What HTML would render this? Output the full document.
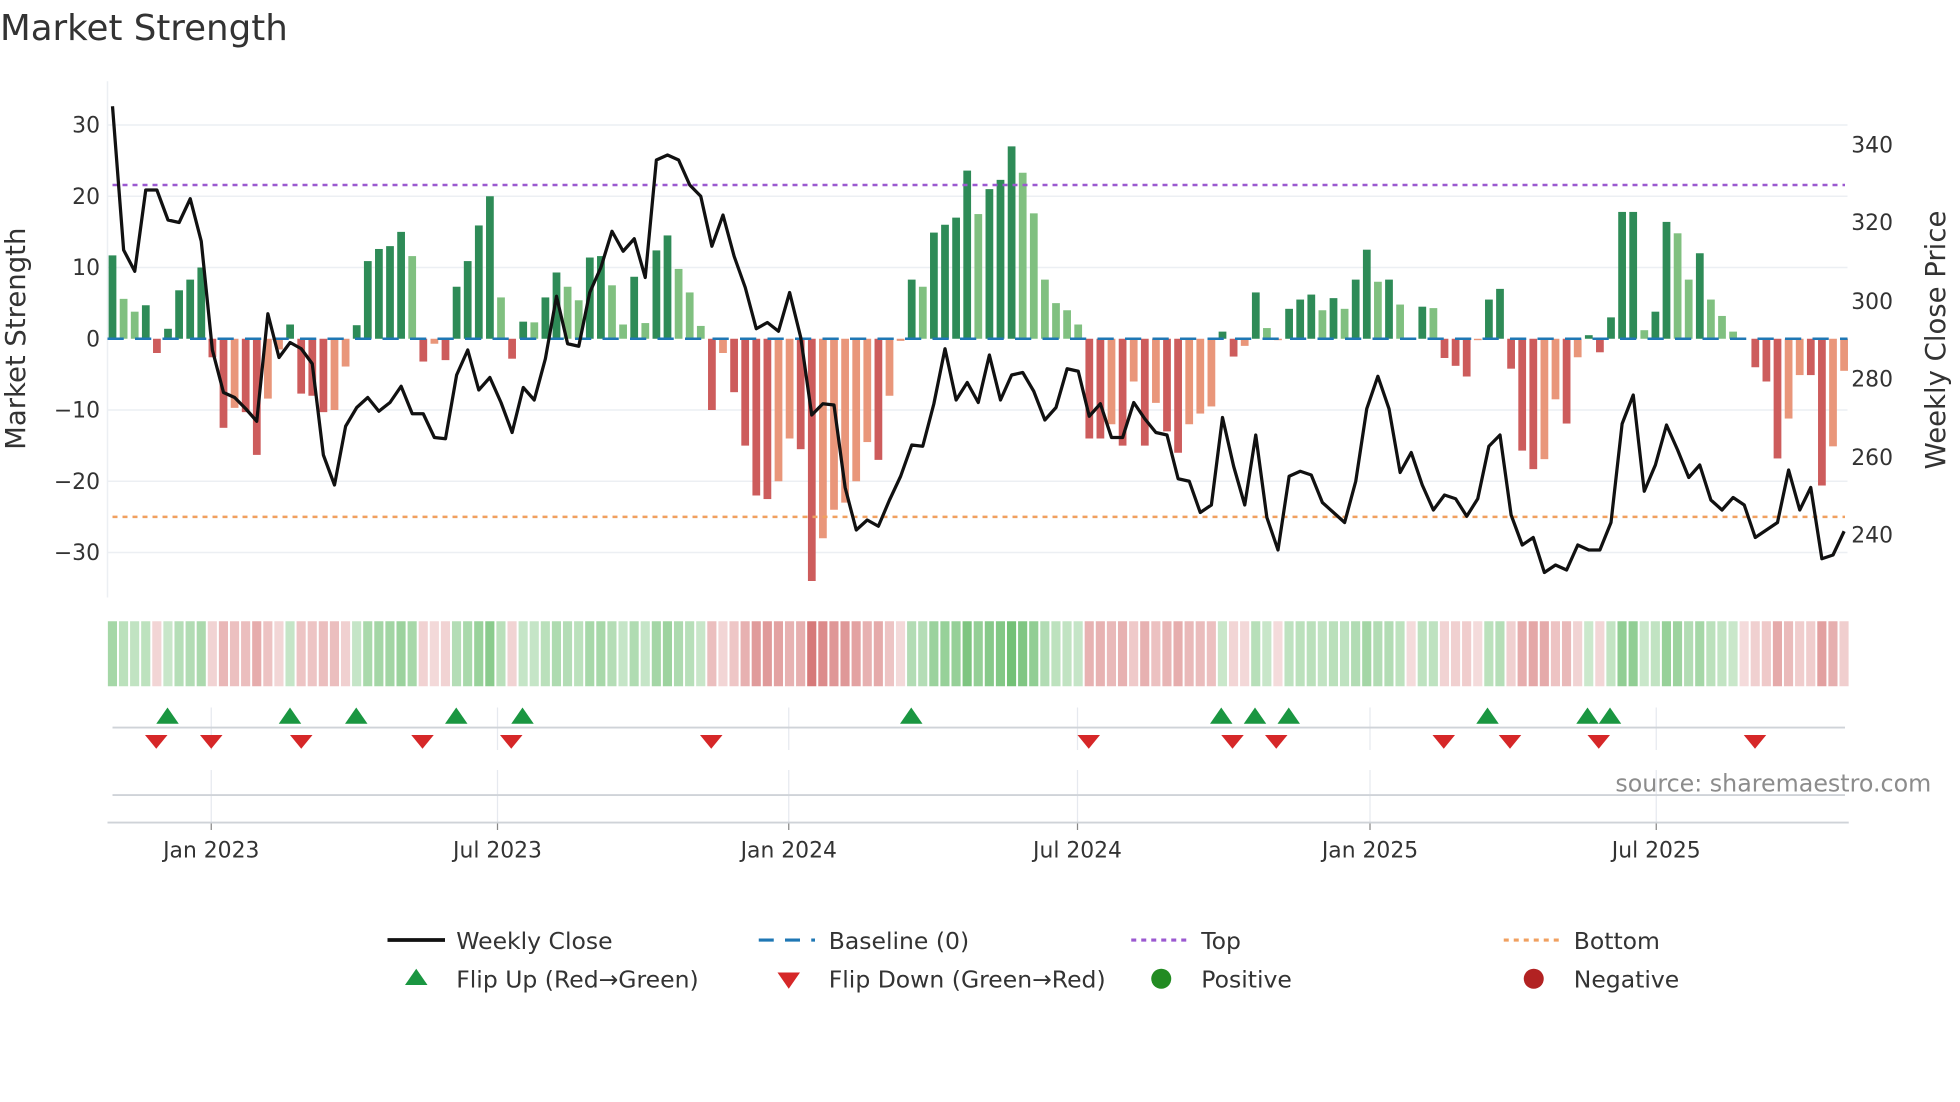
<!DOCTYPE html>
<html><head><meta charset="utf-8">
<style>
html,body{margin:0;padding:0;background:#fff;}
svg{display:block;}
text{font-family:"DejaVu Sans","Liberation Sans",sans-serif;}
</style></head>
<body>
<svg id="s" width="1960" height="1102" viewBox="0 0 1568 881.6" xmlns="http://www.w3.org/2000/svg">
<rect width="1568" height="882" fill="#fff"/>
<text x="0" y="32" font-size="28.5" fill="#333">Market Strength</text>
<g id="grid"></g>
<g id="bars"></g>
<g id="lines"></g>
<g id="strip"></g>
<g id="marks"></g>
<g font-size="17.5" fill="#333">
<text x="80" y="106" text-anchor="end">30</text>
<text x="80" y="163" text-anchor="end">20</text>
<text x="80" y="220" text-anchor="end">10</text>
<text x="80" y="277" text-anchor="end">0</text>
<text x="80" y="334" text-anchor="end">−10</text>
<text x="80" y="391" text-anchor="end">−20</text>
<text x="80" y="448" text-anchor="end">−30</text>
<text x="1481" y="122">340</text>
<text x="1481" y="184">320</text>
<text x="1481" y="247">300</text>
<text x="1481" y="309">280</text>
<text x="1481" y="372">260</text>
<text x="1481" y="434">240</text>
</g>
<text transform="translate(20,271) rotate(-90)" text-anchor="middle" font-size="22" fill="#333">Market Strength</text>
<text transform="translate(1556,272) rotate(-90)" text-anchor="middle" font-size="22" fill="#333">Weekly Close Price</text>
<g font-size="17.5" fill="#333" text-anchor="middle">
<text x="169" y="686">Jan 2023</text>
<text x="398" y="686">Jul 2023</text>
<text x="631" y="686">Jan 2024</text>
<text x="862" y="686">Jul 2024</text>
<text x="1096" y="686">Jan 2025</text>
<text x="1325" y="686">Jul 2025</text>
</g>
<text x="1545" y="633" text-anchor="end" font-size="19" fill="#8c8c8c">source: sharemaestro.com</text>
<g font-size="18.8" fill="#333">
<line x1="310" y1="752" x2="356" y2="752" stroke="#111" stroke-width="3"/>
<text x="365" y="759">Weekly Close</text>
<line x1="607" y1="752" x2="652" y2="752" stroke="#1f77b4" stroke-width="2.5" stroke-dasharray="12,9"/>
<text x="663" y="759">Baseline (0)</text>
<line x1="905" y1="752" x2="950" y2="752" stroke="#9b59d0" stroke-width="2.5" stroke-dasharray="4,4"/>
<text x="961" y="759">Top</text>
<line x1="1203" y1="752" x2="1248" y2="752" stroke="#f0a060" stroke-width="2.5" stroke-dasharray="4,4"/>
<text x="1259" y="759">Bottom</text>
<polygon points="324,788 342,788 333,775" fill="#1a9641"/>
<text x="365" y="790">Flip Up (Red→Green)</text>
<polygon points="622,778 640,778 631,791" fill="#d62728"/>
<text x="663" y="790">Flip Down (Green→Red)</text>
<circle cx="929" cy="783" r="8" fill="#228b22"/>
<text x="961" y="790">Positive</text>
<circle cx="1227" cy="783" r="8" fill="#b22222"/>
<text x="1259" y="790">Negative</text>
</g>
</svg>
<script>
var NS="http://www.w3.org/2000/svg";
function el(p,t,a){var e=document.createElementNS(NS,t);for(var k in a)e.setAttribute(k,a[k]);document.getElementById(p).appendChild(e);return e;}
var D="11.7d 5.6l 3.8l 4.7d -2r 1.4d 6.8d 8.3d 10d -2.6r -12.5r -9.7o -10.3r -16.3r -8.4o -1.5o 2d -7.7r -8r -10.3r -10o -3.9o 1.9d 10.9d 12.6d 13d 15d 11.6l -3.2r -0.7o -3r 7.3d 10.9d 15.9d 20d 5.8l -2.8r 2.4d 2.3l 5.8d 9.3d 7.3l 5.4l 11.4d 11.6d 7.5l 2l 8.7d 2.2l 12.4d 14.5d 9.8l 6.5l 1.8l -10r -2o -7.5r -15r -22r -22.5r -20o -14o -15.5r -34r -28o -24o -23o -20o -14.5o -17r -8o -0.3o 8.3d 7.3l 14.9d 16d 17d 23.6d 17.5l 21d 22.3d 27d 23.3l 17.6l 8.3l 5l 4l 2l -14r -14r -12o -15r -6o -15r -9o -13r -16r -12o -10.5o -9.5o 1d -2.5r -1o 6.5d 1.5l -0.2o 4.2d 5.5d 6.2d 4l 5.7d 4.2l 8.3d 12.5d 8l 8.3d 4.8l 0l 4.5d 4.3l -2.7r -3.8r -5.3r -0.2o 5.5d 7d -4.2r -15.7r -18.3r -16.9o -8.5o -11.9r -2.6o 0.5d -1.9r 3d 17.8d 17.8d 1.2l 3.8d 16.4d 14.8l 8.3l 12d 5.5l 3.2l 1l 0l -4r -6r -16.8r -11.2o -5.1o -5.1r -20.6r -15.1o -4.5o".split(" ");
var C={d:"#2e8b57",l:"#80c080",r:"#cd5c5c",o:"#e9967a"};
var Z=271,K=5.7;
function X(i){return 90+8.88*i;}
[100,157,214,328,385,442].forEach(function(y){el("grid","line",{x1:86,x2:1478,y1:y,y2:y,stroke:"#eceff3","stroke-width":1.2});});
el("grid","line",{x1:86,x2:86,y1:65,y2:478,stroke:"#eceff3","stroke-width":1.2});
D.forEach(function(s,i){var v=parseFloat(s),t=s.slice(-1),h=Math.abs(v)*K;
 el("bars","rect",{x:X(i)-3.1,y:v>=0?Z-h:Z,width:6.2,height:Math.max(h,0.01),fill:C[t]});});
el("lines","line",{x1:86,x2:1478,y1:Z,y2:Z,stroke:"#1f77b4","stroke-width":2,"stroke-dasharray":"13,9"});
el("lines","line",{x1:90,x2:1476,y1:148,y2:148,stroke:"#9b59d0","stroke-width":2,"stroke-dasharray":"4,4"});
el("lines","line",{x1:90,x2:1476,y1:413.5,y2:413.5,stroke:"#f0a060","stroke-width":2,"stroke-dasharray":"4,4"});
var P=[85,200,217,152,152,176,178,159,193,280,314,318,327,337,251,286,274,279,291,364,388,341,326,318,329,322,309,331,331,350,351,300,280,312,302,322,346,310,320,287,237,275,277,234,214,185,201,191,222,128,124,128,148,157,197,172,205,230,263,258,265,234,270,332,323,324,390,424,416,421,400,381,356,357,323,279,320,306,322,284,320,300,298,313,336,326,295,297,333,323,350,350,322,335,346,348,383,385,410,404,334,373,404,348,414,440,381,377,380,402,410,418,385,327,301,327,378,362,388,408,396,399,413,399,357,348,412,436,430,458,452,456,436,440,440,418,339,316,393,372,340,360,382,372,400,408,398,404,430,424,418,376,408,390,447,444,425];
var pts=P.map(function(y,i){return X(i).toFixed(1)+","+y;}).join(" ");
el("lines","polyline",{points:pts,fill:"none",stroke:"#111","stroke-width":2.6,"stroke-linejoin":"round"});
D.forEach(function(s,i){var v=parseFloat(s),a,col;
 if(v>=0.5){a=0.28+0.5*Math.min(1,v/27);col="76,175,80";}else{a=0.22+0.6*Math.min(1,-v/34);col="205,92,92";}
 el("strip","rect",{x:X(i)-3.7,y:497,width:7.3,height:52,fill:"rgba("+col+","+a.toFixed(2)+")"});});
[169,398,631,862,1096,1325].forEach(function(x){
 el("marks","line",{x1:x,x2:x,y1:566,y2:600,stroke:"#e6e9ef","stroke-width":1});
 el("marks","line",{x1:x,x2:x,y1:616,y2:658,stroke:"#e6e9ef","stroke-width":1});
 el("marks","line",{x1:x,x2:x,y1:658,y2:664,stroke:"#888","stroke-width":1});});
el("marks","line",{x1:90,x2:1476,y1:582,y2:582,stroke:"#cfd3d8","stroke-width":1.5});
el("marks","line",{x1:90,x2:1476,y1:636,y2:636,stroke:"#cfd3d8","stroke-width":1.5});
el("marks","line",{x1:86,x2:1479,y1:658,y2:658,stroke:"#cfd3d8","stroke-width":1.5});
[134,232,285,365,418,729,977,1004,1031,1190,1270,1288].forEach(function(x){
 el("marks","polygon",{points:(x-9)+",579 "+(x+9)+",579 "+x+",566",fill:"#1a9641"});});
[125,169,241,338,409,569,871,986,1021,1155,1208,1279,1404].forEach(function(x){
 el("marks","polygon",{points:(x-9)+",588 "+(x+9)+",588 "+x+",599",fill:"#d62728"});});
</script>
</body></html>
